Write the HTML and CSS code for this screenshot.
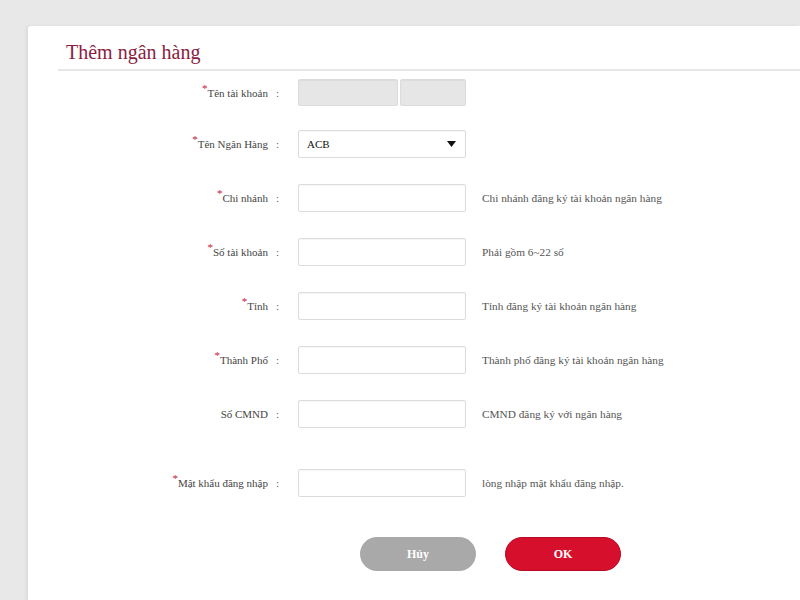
FILE: index.html
```html
<!DOCTYPE html>
<html lang="vi">
<head>
    <meta charset="UTF-8">
    <title>Thêm ngân hàng</title>
    <link rel="stylesheet" href="styles.css">
</head>
<body>
<div class="panel">
    <div class="panel-header">
        <h2>Thêm ngân hàng</h2>
    </div>
    <div class="form">
        <div class="row account">
            <label class="label"><span class="req">*</span>Tên tài khoản</label>
            <span class="colon">:</span>
            <div class="name-boxes">
                <input type="text" class="input disabled first" disabled>
                <input type="text" class="input disabled last" disabled>
            </div>
        </div>
        <div class="row">
            <label class="label"><span class="req">*</span>Tên Ngân Hàng</label>
            <span class="colon">:</span>
            <div class="input select">
                <span>ACB</span>
                <svg width="9" height="6" viewBox="0 0 9 6"><path d="M0 0h9L4.5 6z" fill="#111"/></svg>
            </div>
        </div>
        <div class="row">
            <label class="label"><span class="req">*</span>Chi nhánh</label>
            <span class="colon">:</span>
            <input type="text" class="input">
            <span class="hint">Chi nhánh đăng ký tài khoản ngân hàng</span>
        </div>
        <div class="row">
            <label class="label"><span class="req">*</span>Số tài khoản</label>
            <span class="colon">:</span>
            <input type="text" class="input">
            <span class="hint">Phải gồm 6~22 số</span>
        </div>
        <div class="row">
            <label class="label"><span class="req">*</span>Tỉnh</label>
            <span class="colon">:</span>
            <input type="text" class="input">
            <span class="hint">Tỉnh đăng ký tài khoản ngân hàng</span>
        </div>
        <div class="row">
            <label class="label"><span class="req">*</span>Thành Phố</label>
            <span class="colon">:</span>
            <input type="text" class="input">
            <span class="hint">Thành phố đăng ký tài khoản ngân hàng</span>
        </div>
        <div class="row">
            <label class="label">Số CMND</label>
            <span class="colon">:</span>
            <input type="text" class="input">
            <span class="hint">CMND đăng ký với ngân hàng</span>
        </div>
        <div class="row spaced">
            <label class="label"><span class="req">*</span>Mật khẩu đăng nhập</label>
            <span class="colon">:</span>
            <input type="password" class="input">
            <span class="hint">lòng nhập mật khẩu đăng nhập.</span>
        </div>
    </div>
    <div class="actions">
        <button class="btn cancel">Hủy</button>
        <button class="btn ok">OK</button>
    </div>
</div>
</body>
</html>
```

FILE: styles.css
```css
html, body {
    height: 100%;
}

body {
    margin: 0;
    padding: 26px 0 0 28px;
    box-sizing: border-box;
    background: #E8E8E8;
    font-family: 'Liberation Serif', serif;
    overflow: hidden;
}

.panel {
    background: #FFFFFF;
    height: 100%;
    border-radius: 3px 0 0 0;
    box-shadow: -2px 0 3px rgba(0, 0, 0, 0.06);
}

.panel-header {
    margin-left: 30px;
    height: 43px;
    border-bottom: 2px solid #E6E6E6;
    display: flex;
    align-items: flex-end;
}

.panel-header h2 {
    margin: 0 0 7px 8px;
    font-size: 20px;
    font-weight: 400;
    color: #8B1D3F;
    line-height: 20px;
}

.form {
    padding-top: 8px;
}

.row {
    display: flex;
    align-items: center;
    height: 28px;
    margin-bottom: 26px;
}

.row.account {
    height: 27px;
    margin-bottom: 24px;
}

.row.spaced {
    margin-top: 41px;
    margin-bottom: 40px;
}

.label {
    width: 240px;
    text-align: right;
    font-size: 11px;
    color: #444;
}

.req {
    color: #C4163B;
    font-size: 11px;
    vertical-align: 5px;
    line-height: 0;
}

.colon {
    width: 30px;
    padding-left: 8px;
    box-sizing: border-box;
    font-size: 11px;
    color: #666;
}

.input {
    box-sizing: border-box;
    width: 168px;
    height: 28px;
    margin: 0;
    border: 1px solid #DCDCDC;
    border-radius: 2px;
    background: #FFFFFF;
    box-shadow: inset 0 1px 1px rgba(0, 0, 0, 0.04);
    font-family: 'Liberation Serif', serif;
    font-size: 11px;
}

.name-boxes {
    display: flex;
    gap: 2px;
    height: 27px;
}

.input.disabled {
    background: #E6E6E6;
    height: 27px;
}

.input.first {
    width: 100px;
}

.input.last {
    width: 66px;
}

.select {
    display: flex;
    align-items: center;
    justify-content: space-between;
    padding: 0 9px 0 8px;
    color: #111;
}

.hint {
    margin-left: 16px;
    font-size: 11.3px;
    color: #555;
}

.actions {
    display: flex;
    gap: 29px;
    padding-left: 332px;
}

.btn {
    width: 116px;
    height: 34px;
    border-radius: 17px;
    border: none;
    font-family: 'Liberation Serif', serif;
    font-size: 12px;
    font-weight: 700;
    color: #FFFFFF;
}

.btn.cancel {
    background: #A9A9A9;
}

.btn.ok {
    background: #D60F2C;
    border: 1px solid #B80A22;
}
```
